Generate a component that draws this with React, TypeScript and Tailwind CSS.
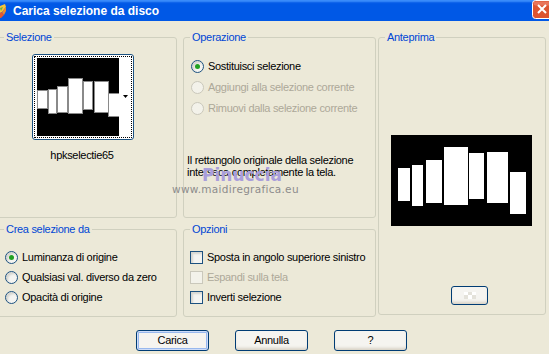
import React from "react";

const thumbBars = [
  [0, 32, 10, 18],
  [11, 31, 8, 24],
  [20, 28, 10, 26],
  [31, 20, 14, 35],
  [46, 23, 9, 28],
  [57, 23, 14, 31],
  [71, 35, 11, 23],
];

const previewBars = [
  [7, 33, 12, 33],
  [21, 30, 11, 41],
  [35, 25, 16, 43],
  [53, 12, 24, 58],
  [78, 18, 15, 46],
  [96, 17, 21, 51],
  [119, 37, 16, 42],
];

function Radio({ checked, disabled }: { checked?: boolean; disabled?: boolean }) {
  return (
    <span
      className={
        disabled
          ? "relative inline-block h-[13px] w-[13px] shrink-0 rounded-full border border-[#CAC8BB] bg-[#F3F2EA]"
          : "relative inline-block h-[13px] w-[13px] shrink-0 rounded-full border border-[#1C5180] bg-[#F4F4F1] shadow-[inset_2px_2px_2px_#D6D6D0]"
      }
    >
      {checked && <span className="absolute left-[3px] top-[3px] h-[5px] w-[5px] rounded-full bg-[#21A121]" />}
    </span>
  );
}

function Check({ disabled }: { disabled?: boolean }) {
  return (
    <span
      className={
        disabled
          ? "inline-block h-[13px] w-[13px] shrink-0 border border-[#CAC8BB] bg-[#F3F2EA]"
          : "inline-block h-[13px] w-[13px] shrink-0 border border-[#1C5180] bg-[#F4F4F1] shadow-[inset_2px_2px_2px_#D6D6D0]"
      }
    />
  );
}

function Group({ title, className, children }: { title: string; className: string; children?: React.ReactNode }) {
  return (
    <fieldset className={"rounded-[3px] border border-[#D0D0BF] " + className}>
      <legend className="ml-[6px] px-[2px] leading-[13px] text-[#0046D5]">{title}</legend>
      {children}
    </fieldset>
  );
}

function XpButton({ label, isDefault }: { label: React.ReactNode; isDefault?: boolean }) {
  return (
    <button
      className={
        isDefault
          ? "flex h-[21px] w-[73px] items-center justify-center rounded-[3px] border border-[#003C74] bg-[#F5F4F0] shadow-[inset_0_0_0_1px_#CEDCF8,inset_0_0_0_2px_#98B8EE]"
          : "flex h-[21px] w-[73px] items-center justify-center rounded-[3px] border border-[#003C74] bg-[#F5F4F0] shadow-[inset_0_-3px_3px_-1px_#D8D2C6]"
      }
    >
      {label}
    </button>
  );
}

export default function App() {
  return (
    <div className="relative flex h-[354px] w-[549px] flex-col bg-[#ECE9D8] font-[Liberation_Sans,Arial,sans-serif] text-[11px] text-black">
      {/* title bar */}
      <div className="flex h-[21px] items-center overflow-hidden bg-[#0058E6] text-white shadow-[inset_0_3px_2px_-1px_#3D8FFB]">
        <svg width="7" height="16" viewBox="0 0 7 16" className="shrink-0">
          <path d="M0 3 L5 1 L6 4 L2 9 L0 10 Z" fill="#F5C53A" />
          <path d="M0 10 L2 9 L4 12 L1 15 L0 15 Z" fill="#E4572E" />
          <path d="M2 9 L6 4 L6 8 L4 12 Z" fill="#F08A2C" />
          <path d="M0 5 L3 4 L1 8 Z" fill="#6BB04A" />
        </svg>
        <span className="ml-[6px] text-[12px] font-bold">Carica selezione da disco</span>
        <svg width="21" height="19" viewBox="0 0 21 19" className="-mr-[4px] ml-auto shrink-0 self-start">
          <rect x="0.5" y="0.5" width="20" height="18" rx="3" fill="#DC5430" stroke="#fff" />
          <rect x="1.5" y="1.5" width="18" height="4" rx="2" fill="#E8755A" />
          <path d="M6 5 L14 13 M14 5 L6 13" stroke="#fff" strokeWidth="2" />
        </svg>
      </div>

      <div className="flex pt-[10px] tracking-[-0.3px]">
        {/* left column */}
        <div className="ml-[-3px] flex w-[180px] shrink-0 flex-col">
          <Group title="Selezione" className="h-[187px]">
            <div className="ml-[34px] mt-[10px] h-[86px] w-[102px] rounded-[3px] border border-[#1C5180] bg-white p-[1px]">
              <div className="flex h-full items-start border border-dotted border-black pl-[2px] pt-[1px]">
                <svg width="82" height="78" viewBox="0 0 82 78" className="shrink-0">
                  <rect width="82" height="78" fill="#000" />
                  {thumbBars.map(([x, y, w, h], i) => (
                    <rect key={i} x={x + 0.5} y={y + 0.5} width={w} height={h} fill="#fff" stroke="#8A8A8A" strokeWidth="1" />
                  ))}
                </svg>
                <svg width="6" height="4" viewBox="0 0 6 4" className="ml-[4px] mt-[37px] shrink-0">
                  <path d="M0 0 H5 L2.5 3 Z" fill="#000" />
                </svg>
              </div>
            </div>
            <div className="ml-[33px] mt-[9px] w-[102px] text-center leading-[13px]">hpkselectie65</div>
          </Group>
          <Group title="Crea selezione da" className="mt-[5px] h-[94px]">
            <div className="flex flex-col whitespace-nowrap pl-[7px] pt-[11px]">
              <label className="flex h-[20px] items-center gap-[4px]"><Radio checked />Luminanza di origine</label>
              <label className="flex h-[20px] items-center gap-[4px]"><Radio />Qualsiasi val. diverso da zero</label>
              <label className="flex h-[20px] items-center gap-[4px]"><Radio />Opacità di origine</label>
            </div>
          </Group>
        </div>

        {/* middle column */}
        <div className="ml-[6px] flex w-[193px] shrink-0 flex-col">
          <Group title="Operazione" className="h-[187px]">
            <div className="flex flex-col whitespace-nowrap pl-[7px] pt-[12px]">
              <label className="flex h-[21px] items-center gap-[4px]"><Radio checked />Sostituisci selezione</label>
              <label className="flex h-[21px] items-center gap-[4px] text-[#ACA899]"><Radio disabled />Aggiungi alla selezione corrente</label>
              <label className="flex h-[21px] items-center gap-[4px] text-[#ACA899]"><Radio disabled />Rimuovi dalla selezione corrente</label>
            </div>
            <p className="mt-[35px] whitespace-nowrap pl-[3px] leading-[12px]">
              Il rettangolo originale della selezione
              <br />
              interseca completamente la tela.
            </p>
          </Group>
          <Group title="Opzioni" className="mt-[5px] h-[94px]">
            <div className="flex flex-col whitespace-nowrap pl-[6px] pt-[11px]">
              <label className="flex h-[20px] items-center gap-[4px]"><Check />Sposta in angolo superiore sinistro</label>
              <label className="flex h-[20px] items-center gap-[4px] text-[#ACA899]"><Check disabled />Espandi sulla tela</label>
              <label className="flex h-[20px] items-center gap-[4px]"><Check />Inverti selezione</label>
            </div>
          </Group>
        </div>

        {/* right column */}
        <Group title="Anteprima" className="ml-[2px] h-[284px] w-[168px] shrink-0">
          <svg width="141" height="91" viewBox="0 0 141 91" className="ml-[12px] mt-[91px] block">
            <rect width="141" height="91" fill="#000" />
            {previewBars.map(([x, y, w, h], i) => (
              <rect key={i} x={x} y={y} width={w} height={h} fill="#fff" />
            ))}
          </svg>
          <div className="ml-[72px] mt-[60px] flex h-[19px] w-[37px] items-center justify-center rounded-[3px] border border-[#003C74] bg-[#F5F4F0] shadow-[inset_0_-3px_3px_-1px_#D8D2C6]">
            <svg width="12" height="7" viewBox="0 0 12 7">
              <rect x="0" y="0" width="4" height="3" fill="#fff" />
              <rect x="4" y="0" width="4" height="3" fill="#E4E2DA" />
              <rect x="8" y="0" width="4" height="3" fill="#fff" />
              <rect x="0" y="3" width="4" height="4" fill="#E4E2DA" />
              <rect x="4" y="3" width="4" height="4" fill="#fff" />
              <rect x="8" y="3" width="4" height="4" fill="#E4E2DA" />
            </svg>
          </div>
        </Group>
      </div>

      {/* buttons */}
      <div className="mt-[13px] flex gap-[26px] pl-[136px] tracking-[-0.3px]">
        <XpButton label="Carica" isDefault />
        <XpButton label="Annulla" />
        <XpButton label="?" />
      </div>

      {/* watermark */}
      <span className="pointer-events-none absolute left-[202px] top-[163px] font-[DejaVu_Sans,sans-serif] text-[17px] font-bold text-[#A99EDB]">
        Pinuccia
      </span>
      <span className="pointer-events-none absolute left-[172px] top-[182px] font-[DejaVu_Sans,sans-serif] text-[10.5px] tracking-[0.3px] text-[#8C8C8C]">
        www.maidiregrafica.eu
      </span>
    </div>
  );
}
